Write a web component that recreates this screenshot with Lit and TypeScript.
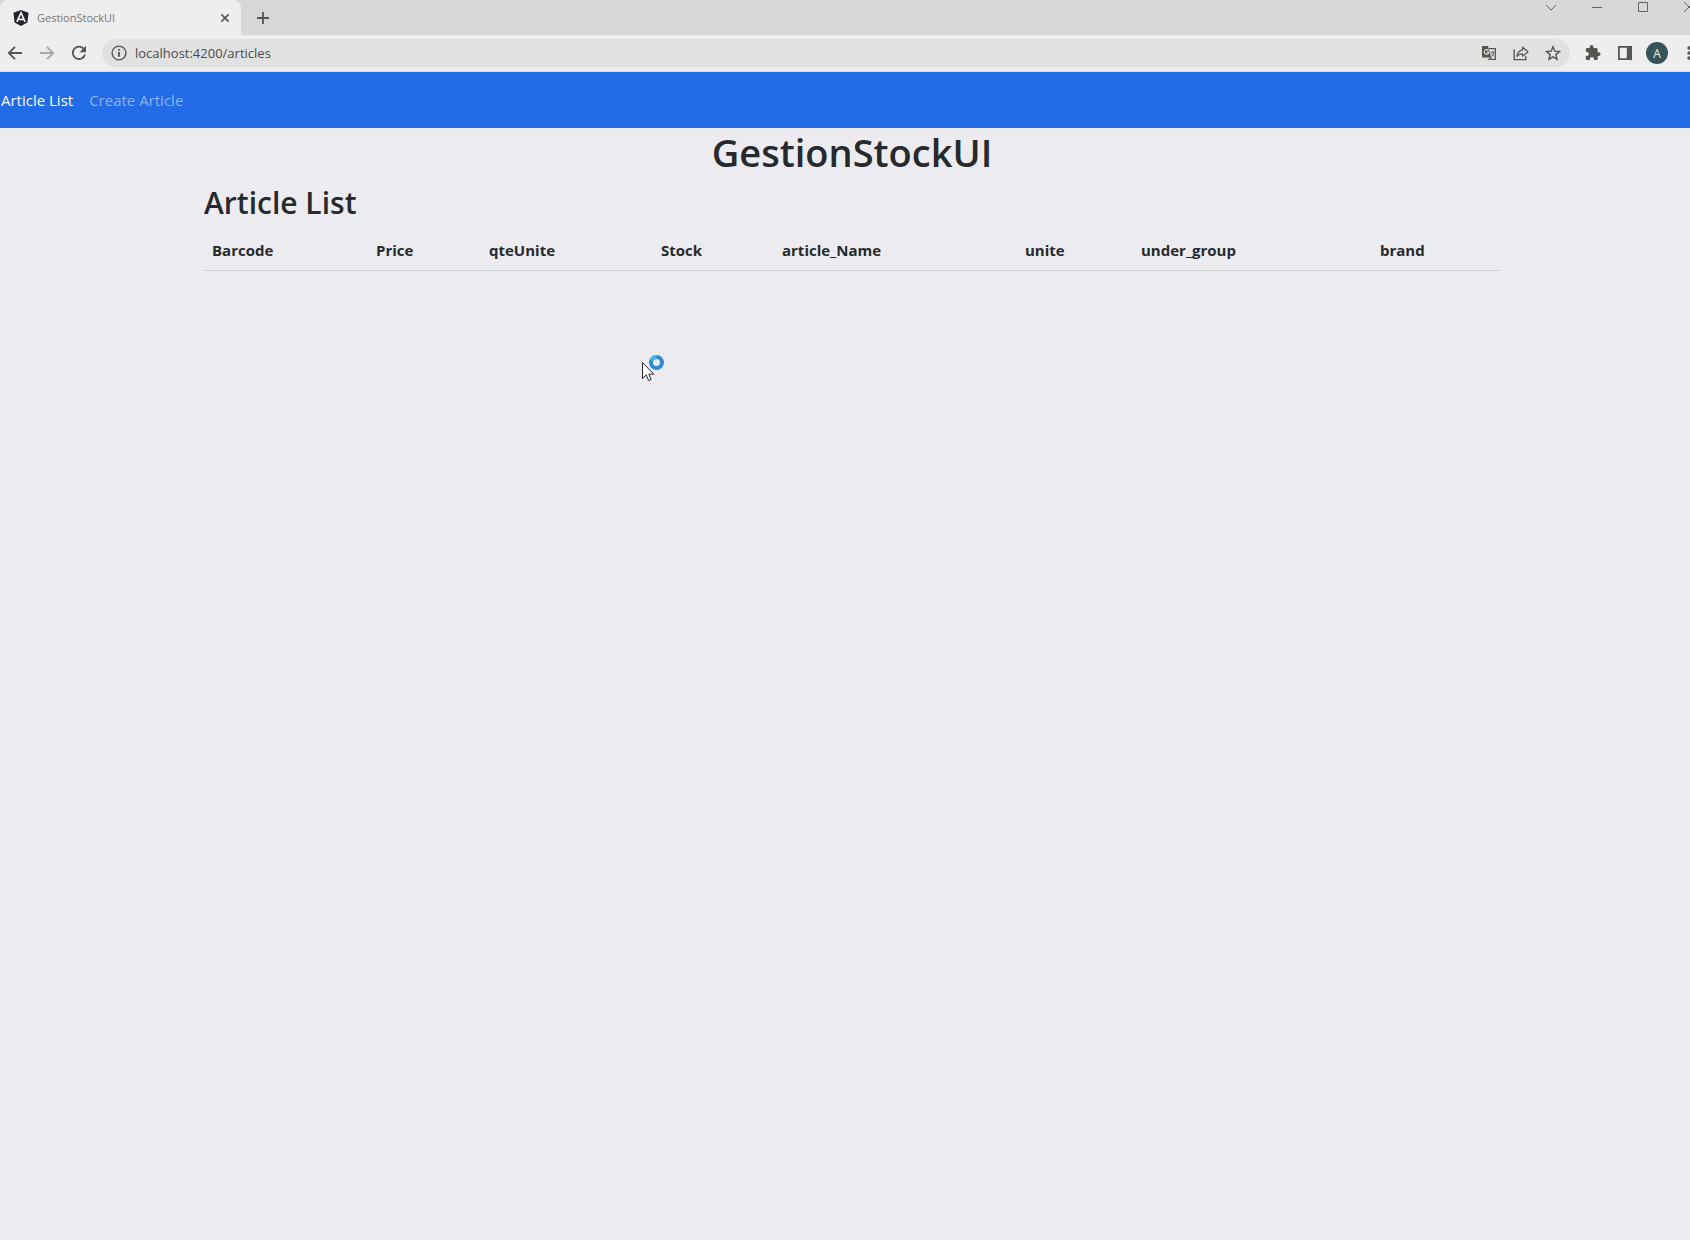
import { LitElement, html, css, svg } from "lit";
import { customElement, property, state } from "lit/decorators.js";
import { classMap } from "lit/directives/class-map.js";

const sans = css`"Segoe UI", "Open Sans", "Noto Sans", sans-serif`;

const icon = (body: unknown, size = 16) => html`
  <svg width=${size} height=${size} viewBox="0 0 16 16" aria-hidden="true" fill="none"
    stroke="currentColor" stroke-width="1.8">${body}</svg>`;

const back = svg`<path d="M15 8H2M8 1.8 1.8 8 8 14.2"/>`;
const forward = svg`<path d="M1 8h13M8 1.8 14.2 8 8 14.2"/>`;
const reload = svg`<path d="M13.2 4.4A6.2 6.2 0 1 0 14 9.4"/><path d="M15 .8v6.4H8.6z" fill="currentColor" stroke="none"/>`;
const info = svg`<circle cx="8" cy="8" r="6.9" stroke-width="1.4"/><path d="M8 7v4.8M8 4.1v1.7"/>`;
const close = svg`<path d="m4.400 4.400 7.200 7.200M11.600 4.400l-7.200 7.200" stroke-width="1.600"/>`;
const plus = svg`<path d="M8 2v12M2 8h12"/>`;
const translate = svg`
  <path d="M1 1h6l3.2 11.6H2a1 1 0 0 1-1-1z" fill="currentColor" stroke="none"/>
  <path d="M8 3.6h6.4v10.8H8l2.4-2.6" stroke-width="1.2"/>
  <path d="M7.4 5.6A2.3 2.3 0 1 0 7.8 7.4H5.8" stroke="#e4e4e4" stroke-width="1.1"/>
  <path d="M9.6 7.2h4M11.6 6.2v1M13 7.2c-.3 1.8-1.4 3-2.4 3.8M10.6 8.4c.5 1.2 1.5 2.2 2.6 2.8" stroke-width=".9"/>`;
const share = svg`
  <path d="M1.2 4.6v10h11.6v-3.4" stroke-width="1.4"/>
  <path d="M9.6 2.2 15 6.8l-5.4 4.4V8.8c-2.6 0-4.400.8-5.6 2.6.4-3.400 2.200-5.900 5.600-6.500z" stroke-width="1.2" stroke-linejoin="round"/>`;
const star = svg`<path d="m8 1.8 1.8 4.4 4.700.4-3.600 3 1.100 4.600L8 11.800l-4 2.400 1.100-4.600-3.600-3 4.700-.4z" stroke-width="1.4"/>`;
const puzzle = svg`<path fill="currentColor" stroke="none" d="M13.600 7.200h-1V4.400c0-.8-.6-1.400-1.400-1.400H8.500V2a1.900 1.900 0 0 0-3.800 0v1H2.200C1.400 3 .9 3.600.9 4.400v2.500h.9a2.100 2.100 0 0 1 0 4.200H.8v2.600c0 .8.6 1.400 1.400 1.400h2.600v-1a2.100 2.100 0 0 1 4.200 0v1h2.300c.8 0 1.400-.6 1.400-1.400V11h1a1.900 1.900 0 0 0-.1-3.800z"/>`;
const panel = svg`<path d="M1.900 1.900h12.200v12.200H1.900z"/><path d="M9.800 1.500h5v13h-5z" fill="currentColor" stroke="none"/>`;
const dots = svg`<g fill="currentColor" stroke="none"><circle cx="8" cy="3" r="1.700"/><circle cx="8" cy="8" r="1.700"/><circle cx="8" cy="13" r="1.700"/></g>`;
const chevron = svg`<path d="m3 5 5 5 5-5" stroke-width="1"/>`;
const minimise = svg`<path d="M3 7.500h10" stroke-width="1"/>`;
const maximise = svg`<path d="M3.500 2.500h9v9h-9z" stroke-width="1"/>`;
const closeWindow = svg`<path d="m3 2 10 10M13 2 3 12" stroke-width="1"/>`;

@customElement("browser-bar")
export class BrowserBar extends LitElement {
  @property() heading = "";
  @property() address = "";

  static styles = css`
    :host { display: block; font-family: ${sans}; color: #55564f; }
    button { display: grid; place-items: center; border: 0; padding: 0; background: none; color: inherit; font: inherit; }
    svg { display: block; }
    .strip { display: flex; align-items: stretch; height: 35px; background: #d7d7d8; }
    .tab { display: flex; align-items: center; width: 241px; box-sizing: border-box; padding: 0 8px 0 13px; gap: 8px; background: #eeeeef; border-radius: 8px 8px 0 0; }
    .name { flex: 1; font-size: 11px; color: #76776f; }
    .add { width: 44px; }
    .windows { display: flex; align-items: flex-start; margin: 0 -8px 0 auto; }
    .windows button { width: 46px; height: 16px; color: #65655f; }
    .tools { display: flex; align-items: center; height: 36px; padding: 0 7px; background: #eeeeef; border-bottom: 1px solid #dcdcdc; }
    .nav { display: flex; gap: 16px; margin-right: 15px; }
    .dim { color: #a7a7a2; }
    .field { flex: 1; display: flex; align-items: center; gap: 8px; height: 28px; padding: 0 9px; border-radius: 14px; background: #e1e1e2; }
    .url { flex: 1; display: grid; font-size: 13px; line-height: 20px; }
    .actions { display: flex; gap: 16px; }
    .extras { display: flex; align-items: center; gap: 16px; margin-left: 15px; }
    .avatar { width: 22px; height: 22px; margin: 0 -3px; border-radius: 50%; background: #37535a; color: #e5eeee; font-size: 12px; }
    input { width: 100%; border: 0; padding: 0; background: none; font: inherit; color: #4b4c47; outline: 0; }
  `;

  render() {
    return html`
      <div class="strip">
        <div class="tab">
          <svg width="16" height="16" viewBox="0 0 16 16" aria-hidden="true">
            <path d="M8 0 15.600 2.700 14.400 12.500 8 16 1.600 12.500.4 2.700z" fill="#22262b"/>
            <path d="M3.900 11.800 8 2.600l4.100 9.200M5.500 9.400h5" fill="none" stroke="#f1f1f1" stroke-width="1.600"/>
          </svg>
          <span class="name">${this.heading}</span>
          <button aria-label="Close tab">${icon(close)}</button>
        </div>
        <button class="add" aria-label="New tab">${icon(plus)}</button>
        <div class="windows">
          <button aria-label="Search tabs">${icon(chevron)}</button>
          <button aria-label="Minimise">${icon(minimise)}</button>
          <button aria-label="Maximise">${icon(maximise)}</button>
          <button aria-label="Close window">${icon(closeWindow)}</button>
        </div>
      </div>
      <div class="tools">
        <div class="nav">
          <button aria-label="Back">${icon(back)}</button>
          <button class="dim" aria-label="Forward">${icon(forward)}</button>
          <button aria-label="Reload">${icon(reload)}</button>
        </div>
        <div class="field">
          <button aria-label="Site information">${icon(info)}</button>
          <div class="url"><input aria-label="Address" .value=${this.address} /></div>
          <div class="actions">
            <button aria-label="Translate">${icon(translate)}</button>
            <button aria-label="Share">${icon(share)}</button>
            <button aria-label="Bookmark">${icon(star)}</button>
          </div>
        </div>
        <div class="extras">
          <button aria-label="Extensions">${icon(puzzle)}</button>
          <button aria-label="Side panel">${icon(panel)}</button>
          <button class="avatar" aria-label="Profile">A</button>
          <button aria-label="Menu">${icon(dots)}</button>
        </div>
      </div>
    `;
  }
}

@customElement("app-root")
export class AppRoot extends LitElement {
  @state() private current = "Article List";

  private links = ["Article List", "Create Article"];
  private columns = ["Barcode", "Price", "qteUnite", "Stock", "article_Name", "unite", "under_group", "brand"];

  static styles = css`
    :host { display: block; position: relative; min-height: 100vh; overflow: hidden; background: #ececf0; font-family: ${sans}; color: #26292d; }
    /* The window reaches a little past the right edge of the screen. */
    .window { margin-right: -14px; }
    .menu { display: flex; gap: 16px; padding: 16px 1px; background: #226be6; }
    .link { font-size: 15px; line-height: 24px; color: #8cb3ef; text-decoration: none; }
    .active { color: #fafcff; }
    .content { max-width: 1296px; margin: 0 auto; padding: 0 12px; }
    h1, h2 { margin: 0 0 8px; font-weight: 600; }
    h1 { font-size: 38px; line-height: 48px; text-align: center; }
    h2 { font-size: 30px; line-height: 38px; }
    table { width: 100%; table-layout: fixed; border-collapse: collapse; }
    th { padding: 8px; font-size: 15px; line-height: 24px; font-weight: 700; text-align: left; border-bottom: 1px solid #cfd0d3; }
    th:nth-child(1) { width: 148px; }
    th:nth-child(2) { width: 97px; }
    th:nth-child(3) { width: 156px; }
    th:nth-child(4) { width: 105px; }
    th:nth-child(5) { width: 227px; }
    th:nth-child(6) { width: 100px; }
    th:nth-child(7) { width: 223px; }
    .pointer { position: absolute; left: 641px; top: 353px; }
  `;

  private choose(event: Event, name: string) {
    event.preventDefault();
    this.current = name;
  }

  render() {
    return html`
      <div class="window">
        <browser-bar heading="GestionStockUI" address="localhost:4200/articles"></browser-bar>
        <nav class="menu">
          ${this.links.map((name) => html`
            <a href="#" class=${classMap({ link: true, active: name === this.current })}
              @click=${(e: Event) => this.choose(e, name)}>${name}</a>`)}
        </nav>
        <main class="content">
          <h1>GestionStockUI</h1>
          <h2>Article List</h2>
          <table>
            <thead><tr>${this.columns.map((name) => html`<th scope="col">${name}</th>`)}</tr></thead>
            <tbody></tbody>
          </table>
        </main>
      </div>
      <svg class="pointer" width="26" height="30" viewBox="0 0 26 30" aria-hidden="true">
        <circle cx="15.500" cy="9.500" r="5.500" fill="none" stroke="#3089d2" stroke-width="4"/>
        <path d="M10.500 7.500a5.500 5.500 0 0 1 5-3.500" fill="none" stroke="#41b9df" stroke-width="4"/>
        <path d="M1.500 9.500v16l3.700-3.500 2.400 5.500 2.500-1.100-2.300-5.300h4.900z" fill="#fff" stroke="#25252c"/>
      </svg>
    `;
  }
}
